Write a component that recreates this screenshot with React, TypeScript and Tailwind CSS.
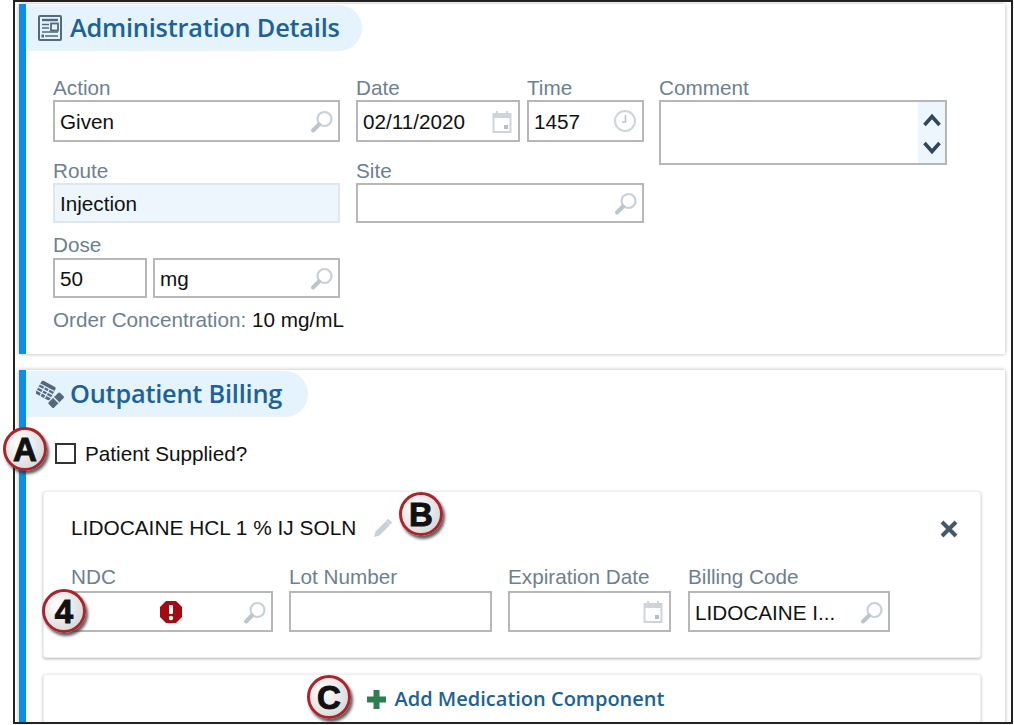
const labelText = "text-[20.7px] leading-[24px] text-[#6e7f90] font-['Liberation_Sans',Arial,sans-serif]";
const valueText = "pt-[2px] text-[20.7px] text-[#111] font-['Liberation_Sans',Arial,sans-serif]";
const boxBase = "flex items-center justify-between border-2 pl-[5px] pr-[6px]";

const SearchIcon = () => (
  <svg width="24" height="24" viewBox="0 0 24 24" fill="none" className="-mr-[2px] mt-[2px] shrink-0">
    <circle cx="14.5" cy="9" r="7" stroke="#c9d0d6" strokeWidth="2.2" />
    <path d="M9 14.5 L3 20.5" stroke="#bcc5cc" strokeWidth="4" strokeLinecap="round" />
  </svg>
);

const CalendarIcon = () => (
  <svg width="20" height="24" viewBox="0 0 20 24" fill="none" className="mt-[1px] shrink-0">
    <path d="M5 1v4M15 1v4" stroke="#cdd5da" strokeWidth="2" />
    <rect x="1.5" y="4" width="17" height="18" fill="#fff" stroke="#cdd5da" strokeWidth="2" />
    <rect x="1.5" y="4" width="17" height="4" fill="#cdd5da" />
    <rect x="12" y="15" width="4" height="4" fill="#b5bfc6" />
  </svg>
);

const ClockIcon = () => (
  <svg width="24" height="24" viewBox="0 0 24 24" fill="none" className="-mr-[1px] shrink-0">
    <circle cx="12" cy="12" r="10" stroke="#cfd6db" strokeWidth="2" />
    <path d="M12.5 6v7H9" stroke="#bcc5cc" strokeWidth="1.6" />
  </svg>
);

const DocIcon = () => (
  <svg width="24" height="26" viewBox="0 0 24 26" fill="none" className="shrink-0">
    <rect x="1" y="1" width="22" height="24" rx="1" fill="#e5f3fd" stroke="#54697c" strokeWidth="2" />
    <path d="M4 5h16" stroke="#54697c" strokeWidth="2.4" />
    <rect x="13" y="8.5" width="7" height="7" stroke="#54697c" strokeWidth="1.8" />
    <path d="M4 9.5h7M4 13h7M4 17h16M7 21h13" stroke="#54697c" strokeWidth="1.6" />
    <rect x="3.5" y="19.5" width="2.5" height="3" fill="#54697c" />
  </svg>
);

const BillingIcon = () => (
  <svg width="28" height="28" viewBox="0 0 28 28" fill="none" className="shrink-0">
    <g transform="rotate(28 10 10)">
      <rect x="2" y="3" width="16" height="15" rx="2" fill="#54697c" />
      <path d="M2 7.5h16M2 11h16M2 14.5h16M7.5 7v11M12.5 7v11" stroke="#e5f3fd" strokeWidth="1.2" />
    </g>
    <g transform="rotate(-45 20 20)">
      <rect x="12" y="16.5" width="16" height="7.5" rx="1.5" fill="#54697c" />
      <path d="M20 16.5v7.5" stroke="#e5f3fd" strokeWidth="1.4" />
    </g>
  </svg>
);

const PencilIcon = () => (
  <svg width="20" height="20" viewBox="0 0 20 20" className="shrink-0">
    <path d="M1 19l1.5-5.5L13 3l4 4L6.5 17.5z" fill="#c9d0d7" />
    <path d="M14.5 1.5l1-.5 3.5 3.5-.5 1-1.5 1-4-4z" fill="#c9d0d7" />
  </svg>
);

const ErrorIcon = () => (
  <svg width="24" height="24" viewBox="0 0 24 24" className="shrink-0">
    <polygon points="7,1 17,1 23,7 23,17 17,23 7,23 1,17 1,7" fill="#a50a12" />
    <rect x="10" y="5" width="4" height="9" rx="1" fill="#fff" />
    <circle cx="12" cy="18" r="2.2" fill="#fff" />
  </svg>
);

const Field = ({
  label,
  value,
  icon,
  className = "",
  box = "h-[42px]",
}: {
  label?: string;
  value?: string;
  icon?: React.ReactNode;
  className?: string;
  box?: string;
}) => (
  <div className={className}>
    {label && <div className={labelText}>{label}</div>}
    <div className={`${boxBase} ${box} border-[#b7b7b7] bg-white`}>
      <span className={valueText}>{value}</span>
      {icon}
    </div>
  </div>
);

const SectionHeader = ({ title, icon, width }: { title: string; icon: React.ReactNode; width: string }) => (
  <div className={`flex h-[46px] items-center rounded-r-[24px] bg-[#e5f3fd] ${width}`}>
    <div className="flex w-[44px] justify-center pl-[3px]">{icon}</div>
    <span className="text-[25.3px] font-semibold tracking-[-0.2px] text-[#1c6296] font-['Open_Sans',sans-serif]">
      {title}
    </span>
  </div>
);

const Badge = ({ text, className }: { text: string; className: string }) => (
  <div
    className={`absolute flex h-[44px] w-[44px] items-center justify-center rounded-full border-[3px] border-[#a8252c] bg-[radial-gradient(circle_at_35%_35%,#ffffff,#cfcfcf)] shadow-[2px_3px_3px_rgba(40,40,40,0.75)] text-[33px] font-bold leading-none text-[#111] [-webkit-text-stroke:1px_#111] font-['Liberation_Sans',Arial,sans-serif] ${className}`}
  >
    {text}
  </div>
);

export default function App() {
  return (
    <div className="relative h-[725px] w-[1014px] overflow-hidden bg-white pl-[13px]">
      <div className="h-[724px] w-[1000px] overflow-hidden border-2 border-[#222] bg-white pl-[4px] pr-[6px] pt-[2px]">
        {/* Administration Details */}
        <section className="h-[350px] border-l-[7px] border-[#0a8fe8] bg-white pt-[1px] shadow-[0_0_4px_rgba(0,0,0,0.3)]">
          <SectionHeader title="Administration Details" icon={<DocIcon />} width="w-[336px]" />
          <div className="mt-[25px] flex pl-[27px]">
            <div className="w-[287px]">
              <Field label="Action" value="Given" icon={<SearchIcon />} />
              <div className={`mt-[17px] ${labelText}`}>Route</div>
              <div className={`${boxBase} h-[40px] border-[#e0e6eb] bg-[#edf5fd]`}>
                <span className={valueText}>Injection</span>
              </div>
              <div className={`mt-[10px] ${labelText}`}>Dose</div>
              <div className="mt-[1px] flex gap-[6px]">
                <Field value="50" className="w-[94px]" box="h-[40px]" />
                <Field value="mg" icon={<SearchIcon />} className="flex-1" box="h-[40px]" />
              </div>
              <div className={`mt-[10px] whitespace-nowrap ${labelText}`}>
                Order Concentration: <span className="text-[#111]">10 mg/mL</span>
              </div>
            </div>
            <div className="ml-[16px] w-[288px]">
              <div className="flex gap-[7px]">
                <Field label="Date" value="02/11/2020" icon={<CalendarIcon />} className="w-[164px]" />
                <Field label="Time" value="1457" icon={<ClockIcon />} className="w-[117px]" />
              </div>
              <Field label="Site" icon={<SearchIcon />} className="mt-[17px]" box="h-[40px]" />
            </div>
            <div className="ml-[15px] w-[288px]">
              <div className={labelText}>Comment</div>
              <div className="flex h-[65px] justify-end border-2 border-[#b7b7b7]">
                <div className="flex w-[27px] flex-col items-center justify-between bg-[#edf5fd] pb-[8px] pt-[11px]">
                  <svg width="20" height="14" viewBox="0 0 20 14" fill="none">
                    <path d="M2.5 12 L10 3.5 L17.5 12" stroke="#33475a" strokeWidth="3.6" />
                  </svg>
                  <svg width="20" height="14" viewBox="0 0 20 14" fill="none">
                    <path d="M2.5 2 L10 10.5 L17.5 2" stroke="#33475a" strokeWidth="3.6" />
                  </svg>
                </div>
              </div>
            </div>
          </div>
        </section>

        {/* Outpatient Billing */}
        <section className="mt-[16px] h-[400px] border-l-[7px] border-[#0a8fe8] bg-white pt-[1px] shadow-[0_0_4px_rgba(0,0,0,0.3)]">
          <SectionHeader title="Outpatient Billing" icon={<BillingIcon />} width="w-[282px]" />
          <label className="ml-[29px] mt-[26px] flex items-center gap-[9px]">
            <span className="h-[21px] w-[21px] border-2 border-[#333] bg-white" />
            <span className="text-[20.7px] leading-[21px] text-[#111] font-['Liberation_Sans',Arial,sans-serif]">
              Patient Supplied?
            </span>
          </label>

          <div className="ml-[17px] mt-[27px] h-[167px] w-[938px] rounded-[3px] border border-[#eeeeee] bg-white pl-[27px] pt-[23px] shadow-[0_1px_3px_rgba(0,0,0,0.3)]">
            <div className="flex h-[26px] items-center pr-[21px]">
              <span className="text-[20.85px] text-[#111] font-['Liberation_Sans',Arial,sans-serif]">
                LIDOCAINE HCL 1 % IJ SOLN
              </span>
              <span className="ml-[17px]">
                <PencilIcon />
              </span>
              <svg width="20" height="20" viewBox="0 0 20 20" fill="none" className="ml-auto mt-[2px]">
                <path d="M3 3 L17 17 M17 3 L3 17" stroke="#44586b" strokeWidth="4" />
              </svg>
            </div>
            <div className="mt-[24px] flex">
              <Field label="NDC" icon={<><span className="ml-[81px]"><ErrorIcon /></span><span className="ml-auto"><SearchIcon /></span></>} className="w-[202px]" box="mt-[2px] h-[41px]" />
              <Field label="Lot Number" className="ml-[16px] w-[203px]" box="mt-[2px] h-[41px]" />
              <Field label="Expiration Date" icon={<CalendarIcon />} className="ml-[16px] w-[163px]" box="mt-[2px] h-[41px]" />
              <Field label="Billing Code" value="LIDOCAINE I..." icon={<SearchIcon />} className="ml-[17px] w-[202px]" box="mt-[2px] h-[41px]" />
            </div>
          </div>

          <div className="ml-[17px] mt-[16px] flex h-[50px] w-[938px] items-center justify-center gap-[9px] rounded-[3px] border border-[#eeeeee] bg-white pl-[7px] shadow-[0_1px_3px_rgba(0,0,0,0.3)]">
            <svg width="19" height="19" viewBox="0 0 19 19">
              <path d="M6.5 0h6v6.5H19v6h-6.5V19h-6v-6.5H0v-6h6.5z" fill="#2f7d51" />
            </svg>
            <span className="text-[20px] font-semibold text-[#1c6296] font-['Open_Sans',sans-serif]">
              Add Medication Component
            </span>
          </div>
        </section>
      </div>

      <Badge text="A" className="left-[3px] top-[427px]" />
      <Badge text="B" className="left-[399px] top-[492px]" />
      <Badge text="4" className="left-[42px] top-[589px]" />
      <Badge text="C" className="left-[307px] top-[675px]" />
    </div>
  );
}
